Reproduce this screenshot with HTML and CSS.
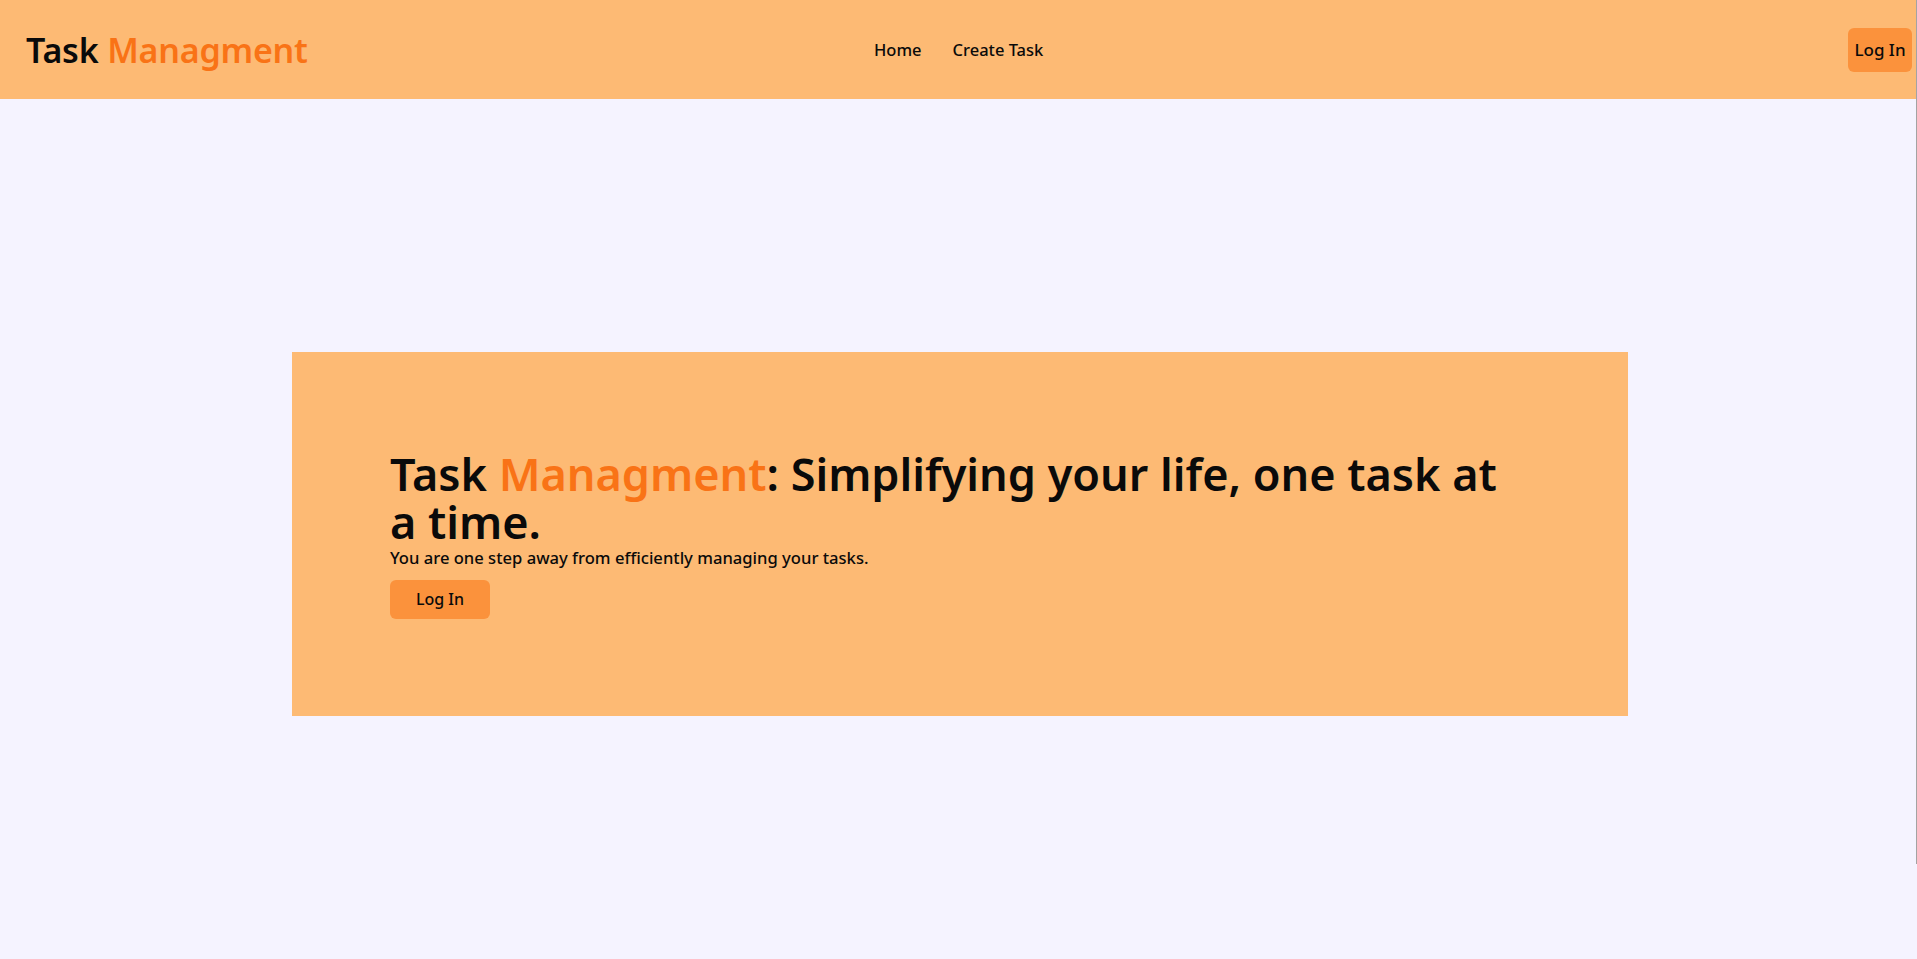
FILE: index.html
```html
<!DOCTYPE html>
<html lang="en">
<head>
<meta charset="utf-8">
<title>Task Managment</title>
<link rel="stylesheet" href="styles.css">
</head>
<body>
<div class="app">
  <header class="header">
    <a class="logo" href="#">Task <span class="accent">Managment</span></a>
    <nav class="nav">
      <a href="#">Home</a>
      <a href="#">Create Task</a>
    </nav>
    <button class="btn btn-head">Log In</button>
  </header>
  <main class="main">
    <section class="hero">
      <div class="hero-inner">
        <h1 class="hero-title">Task <span class="accent">Managment</span>: Simplifying your life, one task at a time.</h1>
        <p class="hero-sub">You are one step away from efficiently managing your tasks.</p>
        <button class="btn btn-hero">Log In</button>
      </div>
    </section>
  </main>
</div>
</body>
</html>
```
FILE: styles.css
```css
* { box-sizing: border-box; }
html, body { margin: 0; padding: 0; }
body {
  background: #f5f3ff;
  font-family: "Noto Sans", "Open Sans", sans-serif;
  color: #0a0a0a;
}
.app {
  min-height: 864px;
  border-right: 1px solid #a3a3a3;
}
.header {
  height: 99px;
  background: #fdba74;
  display: flex;
  align-items: center;
  justify-content: space-between;
  padding: 0 4px 0 26px;
  position: relative;
}
.logo {
  font-size: 34px;
  font-weight: 600;
  color: #0a0a0a;
  text-decoration: none;
  letter-spacing: -0.2px;
}
.accent { color: #f97316; }
.nav {
  position: absolute;
  left: 874px;
  top: 0;
  height: 99px;
  display: flex;
  align-items: center;
  gap: 31px;
}
.nav a {
  color: #0a0a0a;
  text-decoration: none;
  font-size: 16.5px;
  font-weight: 500;
}
.btn {
  font-family: inherit;
  background: #fb923c;
  border: none;
  border-radius: 6px;
  color: #0a0a0a;
  cursor: pointer;
}
.btn-head {
  width: 64px;
  height: 44px;
  font-size: 17px;
  font-weight: 500;
  padding: 0;
}
.main {
  padding-top: 253px;
}
.hero {
  width: 1336px;
  height: 364px;
  margin-left: 292px;
  background: #fdba74;
  display: flex;
  align-items: center;
  padding: 0 98px;
}
.hero-inner { width: 100%; }
.hero-title {
  margin: 0;
  font-size: 45px;
  line-height: 48px;
  font-weight: 600;
}
.hero-sub {
  margin: 0 0 10px;
  font-size: 16.6px;
  line-height: 24px;
  font-weight: 500;
}
.btn-hero {
  width: 100px;
  height: 39px;
  font-size: 16px;
  font-weight: 500;
  padding: 0;
}
```
